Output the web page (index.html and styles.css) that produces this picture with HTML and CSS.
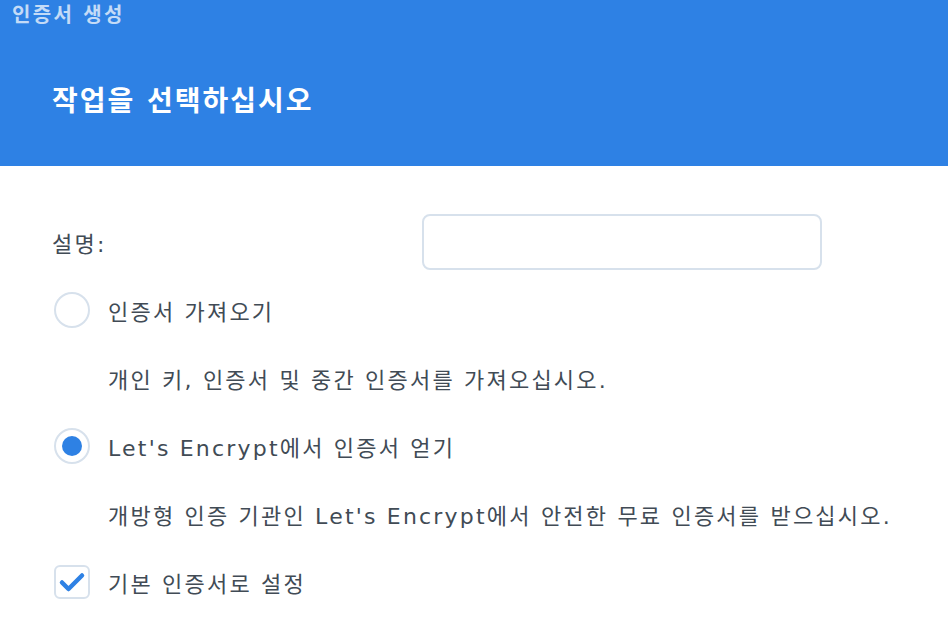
FILE: index.html
```html
<!DOCTYPE html>
<html lang="ko">
<head>
  <meta charset="utf-8">
  <title>인증서 생성</title>
  <link rel="stylesheet" href="styles.css">
</head>
<body>
  <div class="header">
    <div class="window-title">인증서 생성</div>
    <h1 class="step-title">작업을 선택하십시오</h1>
  </div>

  <div class="content">
    <div class="field-row">
      <label class="field-label" for="desc">설명:</label>
      <input class="field-input" type="text" id="desc">
    </div>

    <div class="option-list">
      <div class="option">
        <span class="radio"></span>
        <span class="option-text">인증서 가져오기</span>
      </div>
      <div class="option-desc">개인 키, 인증서 및 중간 인증서를 가져오십시오.</div>

      <div class="option">
        <span class="radio checked"></span>
        <span class="option-text">Let's Encrypt에서 인증서 얻기</span>
      </div>
      <div class="option-desc">개방형 인증 기관인 Let's Encrypt에서 안전한 무료 인증서를 받으십시오.</div>

      <div class="option">
        <span class="checkbox">
          <svg width="28" height="28" viewBox="0 0 28 28">
            <polyline points="4,14.5 10.5,21 24,7.5" fill="none" stroke="#2e81e4" stroke-width="4.5" stroke-linecap="round" stroke-linejoin="round"/>
          </svg>
        </span>
        <span class="option-text">기본 인증서로 설정</span>
      </div>
    </div>
  </div>
</body>
</html>
```

FILE: styles.css
```css
body {
  margin: 0;
  font-family: "DejaVu Sans", "Noto Sans CJK KR", sans-serif;
  color: #414b55;
  background: #fff;
}

.header {
  height: 166px;
  background-color: #2e81e4;
  box-sizing: border-box;
}

.window-title {
  padding: 1px 0 0 12px;
  height: 28px;
  font-size: 20px;
  font-weight: bold;
  line-height: 28px;
  letter-spacing: 2.3px;
  color: rgba(255, 255, 255, 0.72);
}

.step-title {
  margin: 0;
  padding: 55px 0 0 52px;
  font-size: 28px;
  font-weight: bold;
  line-height: 36px;
  letter-spacing: 2px;
  color: #fff;
}

.content {
  padding: 48px 0 0 54px;
  font-size: 22px;
  letter-spacing: 2.2px;
}

.field-row {
  display: flex;
  align-items: center;
  height: 56px;
}

.field-label {
  width: 370px;
  margin-left: -2px;
}

.field-input {
  width: 400px;
  height: 56px;
  box-sizing: border-box;
  border: 2px solid #d7e1ec;
  border-radius: 8px;
  outline: none;
}

.option-list {
  display: grid;
  grid-auto-rows: 36px;
  row-gap: 32px;
  margin-top: 22px;
}

.option {
  display: flex;
  align-items: center;
}

.option-text {
  margin-left: 18px;
}

.option-desc {
  display: flex;
  align-items: center;
  padding-left: 54px;
  white-space: pre;
}

.radio {
  width: 36px;
  height: 36px;
  box-sizing: border-box;
  border: 2px solid #d7e1ec;
  border-radius: 50%;
  display: flex;
  align-items: center;
  justify-content: center;
}

.radio.checked::after {
  content: "";
  width: 20px;
  height: 20px;
  border-radius: 50%;
  background-color: #2e81e4;
}

.checkbox {
  width: 36px;
  height: 34px;
  box-sizing: border-box;
  border: 2px solid #d7e1ec;
  border-radius: 6px;
  display: flex;
  align-items: center;
  justify-content: center;
}
```
